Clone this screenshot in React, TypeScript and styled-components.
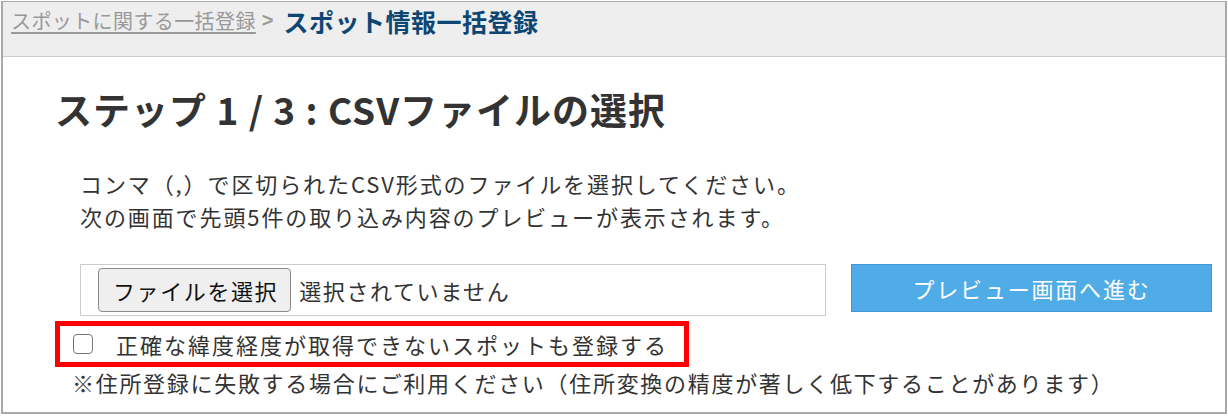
import styled, { createGlobalStyle } from 'styled-components';

const GlobalStyle = createGlobalStyle`
  html, body {
    margin: 0;
    padding: 0;
    background: #ffffff;
  }
  body {
    font-family: "Noto Sans CJK JP", "Noto Sans", "Liberation Sans", sans-serif;
    color: #333333;
  }
`;

const Panel = styled.div`
  margin: 1px 1px 0 1px;
  height: 413px;
  box-sizing: border-box;
  border: 2px solid #a9a9a9;
  border-top-width: 1px;
  overflow: hidden;
`;

const Breadcrumb = styled.div`
  display: flex;
  align-items: center;
  height: 55px;
  padding: 0 0 17px 8px;
  box-sizing: border-box;
  background: #eeeeee;
  border-bottom: 1px solid #cccccc;
  .parent {
    font-size: 20px;
    letter-spacing: 0.4px;
    color: #999999;
    text-decoration: underline;
    text-underline-offset: 3px;
  }
  .sep {
    margin: 0 10px 0 6px;
    font-size: 20px;
    font-weight: 700;
    color: #999999;
    font-family: "Liberation Sans", sans-serif;
  }
  .current {
    font-size: 25px;
    letter-spacing: 0.5px;
    font-weight: 700;
    color: #0d4673;
  }
`;

const Content = styled.div`
  padding: 28px 0 0 52px;
`;

const StepTitle = styled.h1`
  margin: 0 0 34px;
  font-size: 37px;
  line-height: 48px;
  font-weight: 700;
  color: #333333;
  letter-spacing: 1px;
`;

const Lead = styled.p`
  margin: 0 0 31px 25px;
  font-size: 22px;
  line-height: 33px;
  letter-spacing: 1.9px;
  color: #333333;
`;

const UploadRow = styled.div`
  display: flex;
  align-items: flex-start;
  gap: 25px;
  margin-left: 25px;
`;

const FileBox = styled.label`
  display: flex;
  align-items: center;
  width: 746px;
  height: 52px;
  box-sizing: border-box;
  padding: 0 0 0 17px;
  border: 1px solid #cccccc;
  font-size: 22px;
  letter-spacing: 1.6px;
  color: #333333;
  input {
    display: none;
  }
`;

const PickButton = styled.span`
  display: inline-flex;
  align-items: center;
  height: 44px;
  padding: 0 12px 0 14px;
  margin-right: 8px;
  box-sizing: border-box;
  border: 1px solid #8a8a8a;
  border-radius: 4px;
  background: #efefef;
  color: #111111;
  font-size: 22px;
`;

const PreviewButton = styled.button`
  width: 361px;
  height: 48px;
  border: 1px solid #3d96d6;
  background: #50ace7;
  color: #ffffff;
  font-family: inherit;
  font-size: 22px;
  letter-spacing: 1.8px;
  cursor: pointer;
`;

const Highlight = styled.div`
  display: flex;
  align-items: center;
  gap: 23px;
  margin-top: 5px;
  width: 634px;
  height: 46px;
  box-sizing: border-box;
  padding-left: 13px;
  border: 5px solid #ff0000;
  font-size: 22px;
  letter-spacing: 2px;
  color: #333333;
  input {
    appearance: none;
    flex: none;
    width: 20px;
    height: 20px;
    margin: 0;
    border: 1.5px solid #777777;
    border-radius: 4px;
    background: #ffffff;
  }
`;

const Note = styled.p`
  margin: 0 0 0 17px;
  font-size: 22px;
  line-height: 30px;
  letter-spacing: 1.7px;
  color: #333333;
  white-space: nowrap;
`;

export default function App() {
  return (
    <>
      <GlobalStyle />
      <Panel>
        <Breadcrumb>
          <span className="parent">スポットに関する一括登録</span>
          <span className="sep">&gt;</span>
          <span className="current">スポット情報一括登録</span>
        </Breadcrumb>
        <Content>
          <StepTitle>ステップ 1 / 3 : CSVファイルの選択</StepTitle>
          <Lead>
            コンマ（,）で区切られたCSV形式のファイルを選択してください。
            <br />
            次の画面で先頭5件の取り込み内容のプレビューが表示されます。
          </Lead>
          <UploadRow>
            <FileBox>
              <input type="file" accept=".csv" />
              <PickButton>ファイルを選択</PickButton>
              選択されていません
            </FileBox>
            <PreviewButton type="button">プレビュー画面へ進む</PreviewButton>
          </UploadRow>
          <Highlight>
            <input type="checkbox" />
            <span>正確な緯度経度が取得できないスポットも登録する</span>
          </Highlight>
          <Note>※住所登録に失敗する場合にご利用ください（住所変換の精度が著しく低下することがあります）</Note>
        </Content>
      </Panel>
    </>
  );
}
